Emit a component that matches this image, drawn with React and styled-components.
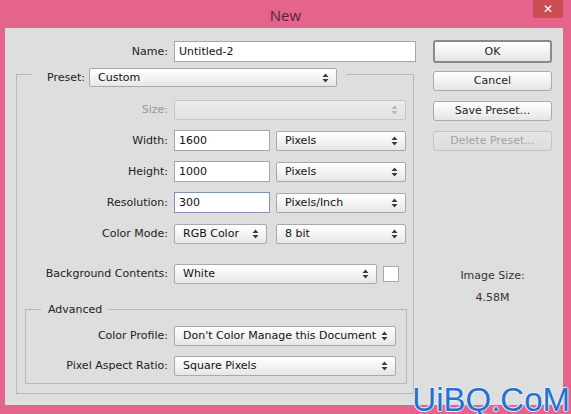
import React from 'react'
import styled, { createGlobalStyle } from 'styled-components'

const Global = createGlobalStyle`
  html, body {
    margin: 0;
    padding: 0;
  }
  body {
    font-family: "DejaVu Sans", Verdana, sans-serif;
    font-size: 11px;
    color: #222;
    background: #e4648c;
  }
  * {
    box-sizing: border-box;
  }
`

const Win = styled.div`
  position: relative;
  width: 571px;
  height: 414px;
  background: #e4648c;
  display: flex;
  flex-direction: column;
  overflow: hidden;
`

Win.Title = styled.div`
  height: 28px;
  flex-shrink: 0;
  display: grid;
  grid-template-columns: 1fr auto 1fr;
`

Win.Caption = styled.div`
  grid-column: 2;
  font-family: "Open Sans", sans-serif;
  font-size: 15px;
  line-height: 28px;
  padding-top: 1px;
  color: #5a2238;
`

Win.Close = styled.div`
  grid-column: 3;
  justify-self: end;
  align-self: start;
  width: 30px;
  height: 18px;
  margin-right: 8px;
  background: #c94d52;
  color: #fff;
  font-family: "DejaVu Sans", sans-serif;
  font-size: 12px;
  line-height: 18px;
  text-align: center;
`

Win.Body = styled.div`
  flex: 1;
  margin: 0 8px 9px 5px;
  background: #dedede;
  display: flex;
`

const Left = styled.div`
  width: 415px;
  padding: 13px 0 0 11px;
`

const Right = styled.div`
  flex: 1;
  padding: 12px 11px 0 13px;
  display: flex;
  flex-direction: column;
  align-items: stretch;
`

const Row = styled.div`
  display: flex;
  align-items: center;
  height: 21px;
  margin-top: ${p => p.mt || 0}px;
`

const Label = styled.div`
  width: ${p => p.w}px;
  flex-shrink: 0;
  text-align: right;
  padding-right: 6px;
  color: ${p => p.disabled ? '#9a9a9a' : '#222'};
  white-space: nowrap;
`

const Input = styled.div`
  width: ${p => p.w}px;
  height: 21px;
  flex-shrink: 0;
  background: #fff;
  border: 1px solid ${p => p.focused ? '#7f95b0' : '#a6a6a6'};
  padding: 0 4px;
  line-height: 19px;
  color: #111;
`

const Select = styled.div`
  width: ${p => p.w}px;
  height: ${p => p.h || 20}px;
  flex-shrink: 0;
  margin-left: ${p => p.ml || 0}px;
  display: flex;
  align-items: center;
  justify-content: space-between;
  padding: 0 7px 0 8px;
  border: 1px solid ${p => p.disabled ? '#c6c6c6' : '#a9a9a9'};
  border-radius: 2px;
  background: ${p => p.disabled
    ? 'linear-gradient(#ececec, #e2e2e2)'
    : 'linear-gradient(#ffffff, #f4f4f4 50%, #e6e6e6)'};
  color: #111;
  white-space: nowrap;
`

const Swatch = styled.div`
  width: 16px;
  height: 16px;
  margin-left: 6px;
  background: #fff;
  border: 1px solid #a8a8a8;
`

const Fieldset = styled.div`
  width: ${p => p.w}px;
  margin: ${p => p.m};
  border: 1px solid #b8b8b8;
  padding-bottom: ${p => p.pb}px;
`

const Legend = styled.div`
  display: flex;
  align-items: center;
  width: fit-content;
  margin: -7px 0 0 15px;
  padding: ${p => p.pad};
  background: #dedede;
  height: ${p => p.h}px;
  line-height: ${p => p.h}px;
  color: #222;
`

const Button = styled.div`
  height: ${p => p.primary ? 23 : 20}px;
  margin-bottom: ${p => p.primary ? 8 : 10}px;
  border: ${p => p.primary ? '2px solid #8a8a8a' : '1px solid #ababab'};
  border-radius: 3px;
  background: ${p => p.disabled
    ? 'linear-gradient(#e6e6e6, #dddddd)'
    : 'linear-gradient(#ffffff, #f3f3f3 50%, #e4e4e4)'};
  color: ${p => p.disabled ? '#a3a3a3' : '#222'};
  border-color: ${p => p.disabled ? '#c4c4c4' : undefined};
  text-align: center;
  line-height: ${p => p.primary ? 19 : 18}px;
`

const Info = styled.div`
  text-align: center;
  line-height: 14px;
  color: #333;
  margin-top: ${p => p.mt}px;
`

const Watermark = styled.div`
  position: absolute;
  right: 1px;
  bottom: 0;
  font-family: "Liberation Sans", Arial, sans-serif;
  font-size: 33px;
  line-height: 28px;
  color: #2670d0;
  text-shadow: 1px 0 0 #e8eefa, -1px 0 0 #e8eefa, 0 1px 0 #e8eefa, 0 -1px 0 #e8eefa;
`

const Arrows = ({ disabled }) => (
  <svg width='7' height='10' viewBox='0 0 7 10'>
    <path d='M3.5 0.5 L6.5 4 L0.5 4 Z M3.5 9.5 L6.5 6 L0.5 6 Z' fill={disabled ? '#b5b5b5' : '#3a3a3a'} />
  </svg>
)

const Drop = ({ children, disabled, ...rest }) => (
  <Select disabled={disabled} {...rest}>
    <span>{children}</span>
    <Arrows disabled={disabled} />
  </Select>
)

const PRESET_LW = 157
const ADV_LW = 148

export default function App () {
  return (
    <Win>
      <Global />
      <Win.Title>
        <Win.Caption>New</Win.Caption>
        <Win.Close>✕</Win.Close>
      </Win.Title>
      <Win.Body>
        <Left>
          <Row>
            <Label w={158}>Name:</Label>
            <Input w={242}>Untitled-2</Input>
          </Row>

          <Fieldset w={398} m='12px 0 0 0' pb={9}>
            <Legend pad='0 9px 0 15px' h={19}>
              <span style={{ marginRight: 4 }}>Preset:</span>
              <Drop w={248} h={19}>Custom</Drop>
            </Legend>

            <Row mt={12}>
              <Label w={PRESET_LW} disabled>Size:</Label>
              <Drop w={232} disabled />
            </Row>
            <Row mt={10}>
              <Label w={PRESET_LW}>Width:</Label>
              <Input w={96}>1600</Input>
              <Drop w={130} ml={6}>Pixels</Drop>
            </Row>
            <Row mt={10}>
              <Label w={PRESET_LW}>Height:</Label>
              <Input w={96}>1000</Input>
              <Drop w={130} ml={6}>Pixels</Drop>
            </Row>
            <Row mt={10}>
              <Label w={PRESET_LW}>Resolution:</Label>
              <Input w={96} focused>300</Input>
              <Drop w={130} ml={6}>Pixels/Inch</Drop>
            </Row>
            <Row mt={10}>
              <Label w={PRESET_LW}>Color Mode:</Label>
              <Drop w={93}>RGB Color</Drop>
              <Drop w={130} ml={9}>8 bit</Drop>
            </Row>
            <Row mt={19}>
              <Label w={PRESET_LW}>Background Contents:</Label>
              <Drop w={203}>White</Drop>
              <Swatch />
            </Row>

            <Fieldset w={382} m='25px 0 0 8px' pb={7}>
              <Legend pad='0 6px 0 7px' h={13}>Advanced</Legend>
              <Row mt={9}>
                <Label w={ADV_LW}>Color Profile:</Label>
                <Drop w={222}>Don't Color Manage this Document</Drop>
              </Row>
              <Row mt={9}>
                <Label w={ADV_LW}>Pixel Aspect Ratio:</Label>
                <Drop w={222}>Square Pixels</Drop>
              </Row>
            </Fieldset>
          </Fieldset>
        </Left>

        <Right>
          <Button primary>OK</Button>
          <Button>Cancel</Button>
          <Button>Save Preset...</Button>
          <Button disabled>Delete Preset...</Button>
          <Info mt={108}>Image Size:</Info>
          <Info mt={8}>4.58M</Info>
        </Right>
      </Win.Body>
      <Watermark>UiBQ.CoM</Watermark>
    </Win>
  )
}
